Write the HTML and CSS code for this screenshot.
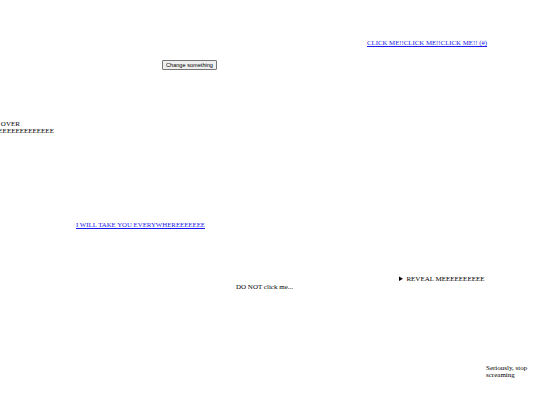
FILE: index.html
```html
<!DOCTYPE html>
<html>
<head>
<meta charset="utf-8">
<link rel="stylesheet" href="styles.css">
</head>
<body>
<div class="canvas">
  <a class="item click" href="#">CLICK ME!!CLICK ME!!CLICK ME!! (#)</a>
  <button class="item change">Change something</button>
  <div class="item hover">HOVER OVER<br>MEEEEEEEEEEEEEEEEE</div>
  <a class="item take" href="#">I WILL TAKE YOU EVERYWHEREEEEEEE</a>
  <div class="item dont">DO NOT click me...</div>
  <details class="item reveal"><summary>REVEAL MEEEEEEEEEE</summary></details>
  <div class="item serious">Seriously, stop<br>screaming</div>
</div>
</body>
</html>
```
FILE: styles.css
```css
html, body {
  margin: 0;
  padding: 0;
  background: #fff;
}
.canvas {
  position: relative;
  width: 540px;
  height: 405px;
  overflow: hidden;
  font-family: "Liberation Serif", serif;
  font-size: 7px;
  line-height: 6.5px;
  color: #000;
}
.item {
  position: absolute;
  white-space: nowrap;
}
a {
  color: #1a1aee;
  font-size: 6.8px;
}
.click { left: 367px; top: 40px; }
.change {
  left: 162px; top: 60px;
  font-family: "Liberation Sans", Arial, sans-serif;
  font-size: 5.6px;
  line-height: 6px;
  padding: 1px 3px;
  background: #efefef;
  border: 1px solid #767676;
  border-radius: 1px;
  color: #000;
}
.hover { left: -25px; top: 121px; }
.take { left: 76px; top: 222px; }
.dont { left: 236px; top: 284px; }
.reveal { left: 399px; top: 276px; }
.reveal summary { cursor: pointer; }
.serious { left: 486px; top: 365px; }
```
